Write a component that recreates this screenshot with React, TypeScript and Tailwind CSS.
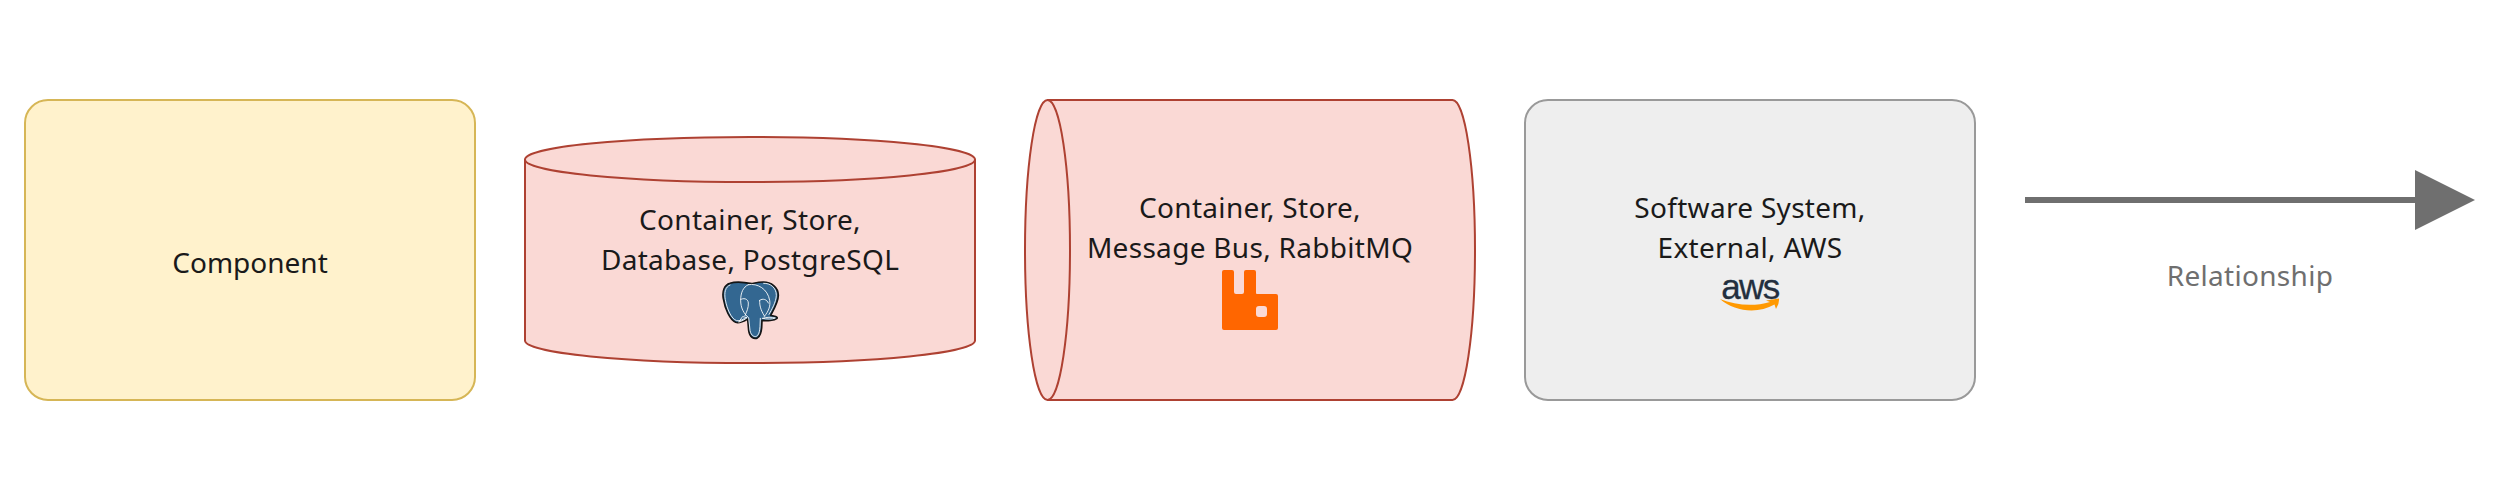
const font = "font-['Noto_Sans','Open_Sans',sans-serif]";

function PostgresLogo() {
  return (
    <svg viewBox="0 0 210 210" className="w-[70px] h-[70px] -mt-[2px] block">
      <path d="M45 19C28 24 21 42 25 65C30 95 44 128 62 136C73 140 86 133 98 126L101 160C104 182 118 188 128 182C137 176 139 164 140 152L141 130C155 132 178 131 186 124C189 120 178 117 167 115C176 98 190 75 190 55C190 30 168 15 145 15C130 15 120 18 110 20C95 17 65 12 45 19Z" fill="#336791" stroke="#151515" strokeWidth="5" strokeLinejoin="round" />
      <g fill="none" stroke="#fff" strokeWidth="2.6" strokeLinecap="round" strokeLinejoin="round">
        <path d="M45 24C31 29 27 47 31 68C36 96 49 126 65 131C74 133 86 127 96 120" />
        <path d="M100 23C84 30 77 48 77 70C77 92 86 110 101 122L105 160C108 178 121 182 127 176C133 170 134 160 135 148L136 124" />
        <path d="M100 23C128 18 158 36 164 70C167 88 160 104 148 118" />
        <path d="M146 19C166 18 184 32 184 55C183 76 170 98 162 112" />
        <path d="M77 68C84 62 99 64 100 78C101 92 95 104 90 116" />
        <path d="M134 70C143 63 156 67 160 78M134 70C133 90 141 106 149 118" />
        <path d="M143 124C155 127 172 127 181 123C170 120 154 120 143 124Z" />
        <path d="M72 135C80 132 90 128 96 122L84 119Z" />
      </g>
    </svg>
  );
}

function RabbitLogo() {
  return (
    <svg viewBox="0 0 56 60" className="w-14 h-[60px] block mt-[3px]">
      <path fillRule="evenodd" d="M2 0H10Q12 0 12 2V22Q12 24 14 24H20Q22 24 22 22V2Q22 0 24 0H32Q34 0 34 2V23Q34 24 35 24H54Q56 24 56 26V58Q56 60 54 60H2Q0 60 0 58V2Q0 0 2 0ZM37 36Q34 36 34 39V44Q34 47 37 47H42Q45 47 45 44V39Q45 36 42 36Z" fill="#ff6600" />
    </svg>
  );
}

function AwsLogo() {
  return (
    <div className="flex flex-col items-center w-[60px]">
      <span className="font-['Liberation_Sans',sans-serif] text-[35px] leading-[22px] h-[22px] font-normal tracking-[-1.5px] [-webkit-text-stroke:0.3px_#232f3e] text-[#232f3e]">aws</span>
      <svg viewBox="0 0 60 14" className="w-[60px] h-[14px] block">
        <path d="M0 1C15 7 33 9 50 4L46 2.5L59 0.5Q59.5 6 56 11L54.5 6.5C38 16 15 14 0 1Z" fill="#ff9900" />
      </svg>
    </div>
  );
}

function Lines({ lines }: { lines: string[] }) {
  return (
    <div className={`${font} text-[28px] leading-[40px] tracking-[0.3px] text-[#1a1a1a] text-center`}>
      {lines.map((l) => (
        <div key={l} className="whitespace-nowrap">{l}</div>
      ))}
    </div>
  );
}

export default function App() {
  return (
    <div className="w-[2500px] h-[500px] bg-white flex items-center gap-[48px] px-[24px] overflow-hidden">
      <div className="w-[452px] h-[302px] shrink-0 rounded-[24px] border-2 border-[#d6b656] bg-[#fff2cc] flex items-center justify-center pt-[24px]">
        <div className={`${font} text-[28px] leading-[40px] text-[#1a1a1a]`}>Component</div>
      </div>

      <div className="relative w-[452px] h-[228px] shrink-0 flex flex-col items-center pt-[63px]">
        <svg viewBox="-1 0 452 228" className="absolute inset-0 w-full h-full overflow-visible">
          <path d="M0 23.500C0 11 100 1 225 1S450 11 450 23.500V204.500C450 217 350 227 225 227S0 217 0 204.500Z" fill="#fad9d5" stroke="#ae4132" strokeWidth="2" />
          <path d="M0 23.500C0 36 100 46 225 46S450 36 450 23.500" fill="none" stroke="#ae4132" strokeWidth="2" />
        </svg>
        <div className="relative flex flex-col items-center">
          <Lines lines={["Container, Store,", "Database, PostgreSQL"]} />
          <PostgresLogo />
        </div>
      </div>

      <div className="relative w-[452px] h-[302px] shrink-0 flex flex-col items-center pt-[88px]">
        <svg viewBox="-1 -1 452 302" className="absolute inset-0 w-full h-full overflow-visible">
          <path d="M22.500 0H427.500C440 0 450 67 450 150S440 300 427.500 300H22.500C10 300 0 233 0 150S10 0 22.500 0Z" fill="#fad9d5" stroke="#ae4132" strokeWidth="2" />
          <path d="M22.500 0C35 0 45 67 45 150S35 300 22.500 300" fill="none" stroke="#ae4132" strokeWidth="2" />
        </svg>
        <div className="relative flex flex-col items-center">
          <Lines lines={["Container, Store,", "Message Bus, RabbitMQ"]} />
          <RabbitLogo />
        </div>
      </div>

      <div className="w-[452px] h-[302px] shrink-0 rounded-[24px] border-2 border-[#999999] bg-[#eeeeee] flex flex-col items-center pt-[86px]">
        <Lines lines={["Software System,", "External, AWS"]} />
        <div className="mt-[9px]"><AwsLogo /></div>
      </div>

      <div className="w-[452px] h-[300px] shrink-0 flex flex-col items-center pt-[70px]">
        <svg viewBox="0 0 452 60" className="w-[452px] h-[60px] block">
          <path d="M1 27H391V0L451 30L391 60V33H1Z" fill="#6f6f6f" />
        </svg>
        <div className={`${font} text-[28px] leading-[40px] tracking-[0.3px] text-[#6f6f6f] mt-[25px]`}>Relationship</div>
      </div>
    </div>
  );
}
